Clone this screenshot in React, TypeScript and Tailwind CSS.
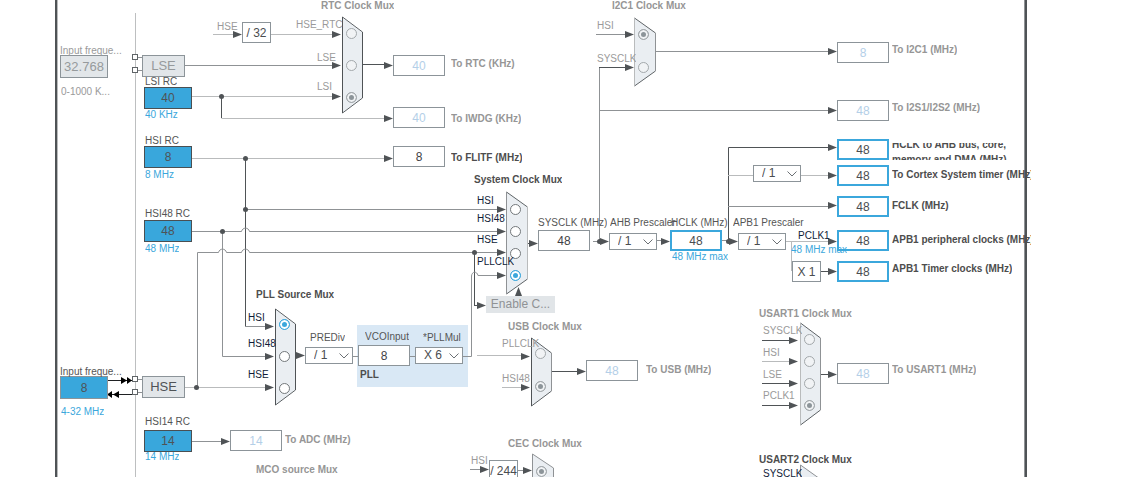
import { useState } from "react";
import clsx from "clsx";

type Tone = "text" | "title" | "muted" | "mutedTitle" | "signal" | "blue";

interface Caption {
  text: string;
  x: number;
  y: number; // baseline
  tone: Tone;
  htmlFor?: string;
  width?: number;
}

interface Field {
  id: string;
  x: number;
  y: number;
  value: string;
  kind: "source" | "input" | "locked" | "output" | "idle" | "limit";
  label?: string;
}

interface Mux {
  id: string;
  x: number;
  y: number;
  width: number;
  height: number;
  active: boolean;
  left: string;
  right: string;
  selected: number;
  inputs: { name: string; x: number; y: number; dot: number; width?: number }[];
}

const DARK = "#4f5356";
const MID = "#8f9295";
const LIGHT = "#b9bbbc";

const toneClass: Record<Tone, string> = {
  text: "text-[#555555]",
  title: "font-bold text-[#4d4d4d]",
  muted: "text-[#9a9a9a]",
  mutedTitle: "font-bold text-[#969696]",
  signal: "text-[#101c38]",
  blue: "text-[#3ba7dc]",
};

const fieldClass: Record<Field["kind"], string> = {
  source: "w-12 h-[22px] border border-[#4a4f52] bg-[#39a7dc] text-[#4f5356]",
  input: "w-12 h-[23px] border border-[#8c9499] bg-[#39a7dc] text-[#4f5356]",
  locked: "w-12 h-[23px] border border-[#8c9499] bg-[#e2e6e9] text-[13px] text-[#969a9c]",
  output: "w-[52px] h-[21px] border border-[#8c9499] bg-white text-[#3f4245]",
  idle: "w-[52px] h-[21px] border border-[#8c9499] bg-white text-[#b4cfe8]",
  limit: "w-[52px] h-[21px] border-2 border-[#3ba7dc] bg-white text-[#4a4d50]",
};

const fields: Field[] = [
  { id: "lse-freq", x: 60, y: 55, value: "32.768", kind: "locked" },
  { id: "hse-freq", x: 60, y: 376, value: "8", kind: "input" },
  { id: "lsi-rc", x: 144, y: 87, value: "40", kind: "source" },
  { id: "hsi-rc", x: 144, y: 146, value: "8", kind: "source" },
  { id: "hsi48-rc", x: 144, y: 220, value: "48", kind: "source" },
  { id: "hsi14-rc", x: 144, y: 430, value: "14", kind: "source" },
  { id: "rtc", x: 393, y: 55, value: "40", kind: "idle" },
  { id: "iwdg", x: 393, y: 107, value: "40", kind: "idle" },
  { id: "flitf", x: 393, y: 146, value: "8", kind: "output" },
  { id: "adc", x: 230, y: 430, value: "14", kind: "idle" },
  { id: "vco", x: 358, y: 345, value: "8", kind: "output" },
  { id: "sysclk", x: 538, y: 230, value: "48", kind: "output" },
  { id: "usb", x: 586, y: 360, value: "48", kind: "idle" },
  { id: "hclk", x: 670, y: 230, value: "48", kind: "limit" },
  { id: "i2c1", x: 837, y: 42, value: "8", kind: "idle" },
  { id: "i2s", x: 837, y: 100, value: "48", kind: "idle" },
  { id: "ahb-bus", x: 837, y: 139, value: "48", kind: "limit" },
  { id: "cortex", x: 837, y: 165, value: "48", kind: "limit" },
  { id: "fclk", x: 837, y: 196, value: "48", kind: "limit" },
  { id: "apb1-periph", x: 837, y: 230, value: "48", kind: "limit" },
  { id: "apb1-timer", x: 837, y: 261, value: "48", kind: "limit" },
  { id: "usart1", x: 837, y: 363, value: "48", kind: "idle" },
];

const factors = [
  { text: "/ 32", x: 242, y: 22 },
  { text: "X 1", x: 792, y: 261 },
  { text: "/ 244", x: 489, y: 460 },
];

const dividers = ["/ 1", "/ 2", "/ 4", "/ 8", "/ 16"];

const prescalers = [
  { id: "prediv", x: 305, y: 347, value: "/ 1", options: dividers },
  { id: "pllmul", x: 415, y: 347, value: "X 6", options: ["X 2", "X 3", "X 4", "X 6", "X 8", "X 12"] },
  { id: "ahb", x: 609, y: 233, value: "/ 1", options: dividers },
  { id: "apb1", x: 738, y: 233, value: "/ 1", options: dividers },
  { id: "systick", x: 753, y: 165, value: "/ 1", options: ["/ 1", "/ 8"], label: "Cortex prescaler" },
];

const captions: Caption[] = [
  { text: "Input freque...", x: 60, y: 54, tone: "muted", htmlFor: "lse-freq" },
  { text: "0-1000 K...", x: 61, y: 95, tone: "muted" },
  { text: "LSI RC", x: 145, y: 85, tone: "text", htmlFor: "lsi-rc" },
  { text: "40 KHz", x: 145, y: 118, tone: "blue" },
  { text: "HSI RC", x: 145, y: 144, tone: "text", htmlFor: "hsi-rc" },
  { text: "8 MHz", x: 145, y: 178, tone: "blue" },
  { text: "HSI48 RC", x: 145, y: 217, tone: "text", htmlFor: "hsi48-rc" },
  { text: "48 MHz", x: 145, y: 252, tone: "blue" },
  { text: "Input freque...", x: 60, y: 375, tone: "text", htmlFor: "hse-freq" },
  { text: "4-32 MHz", x: 61, y: 415, tone: "blue" },
  { text: "HSI14 RC", x: 145, y: 425, tone: "text", htmlFor: "hsi14-rc" },
  { text: "14 MHz", x: 145, y: 460, tone: "blue" },
  { text: "HSE", x: 217, y: 30, tone: "muted" },
  { text: "HSI", x: 471, y: 464, tone: "muted" },
  { text: "RTC Clock Mux", x: 321, y: 9, tone: "mutedTitle" },
  { text: "To RTC (KHz)", x: 451, y: 67, tone: "mutedTitle", htmlFor: "rtc" },
  { text: "To IWDG (KHz)", x: 451, y: 122, tone: "mutedTitle", htmlFor: "iwdg" },
  { text: "To FLITF (MHz)", x: 451, y: 161, tone: "title", htmlFor: "flitf" },
  { text: "System Clock Mux", x: 474, y: 183, tone: "title" },
  { text: "SYSCLK (MHz)", x: 538, y: 226, tone: "text", htmlFor: "sysclk" },
  { text: "AHB Prescaler", x: 610, y: 226, tone: "text", htmlFor: "ahb" },
  { text: "HCLK (MHz)", x: 671, y: 226, tone: "text", htmlFor: "hclk" },
  { text: "48 MHz max", x: 672, y: 260, tone: "blue" },
  { text: "APB1 Prescaler", x: 733, y: 226, tone: "text", htmlFor: "apb1" },
  { text: "PCLK1", x: 798, y: 239, tone: "signal" },
  { text: "48 MHz max", x: 791, y: 253, tone: "blue" },
  { text: "I2C1 Clock Mux", x: 612, y: 9, tone: "mutedTitle" },
  { text: "To I2C1 (MHz)", x: 892, y: 53, tone: "mutedTitle", htmlFor: "i2c1" },
  { text: "To I2S1/I2S2 (MHz)", x: 892, y: 111, tone: "mutedTitle", htmlFor: "i2s" },
  { text: "To Cortex System timer (MHz)", x: 892, y: 178, tone: "title", htmlFor: "cortex", width: 139 },
  { text: "FCLK (MHz)", x: 892, y: 209, tone: "title", htmlFor: "fclk" },
  { text: "APB1 peripheral clocks (MHz)", x: 892, y: 243, tone: "title", htmlFor: "apb1-periph", width: 139 },
  { text: "APB1 Timer clocks (MHz)", x: 892, y: 272, tone: "title", htmlFor: "apb1-timer" },
  { text: "PLL Source Mux", x: 256, y: 298, tone: "title" },
  { text: "PREDiv", x: 310, y: 341, tone: "text", htmlFor: "prediv" },
  { text: "VCOInput", x: 365, y: 340, tone: "text", htmlFor: "vco" },
  { text: "*PLLMul", x: 423, y: 341, tone: "text", htmlFor: "pllmul" },
  { text: "PLL", x: 360, y: 378, tone: "title" },
  { text: "To ADC (MHz)", x: 285, y: 443, tone: "mutedTitle", htmlFor: "adc" },
  { text: "MCO source Mux", x: 256, y: 473, tone: "mutedTitle" },
  { text: "USB Clock Mux", x: 508, y: 330, tone: "mutedTitle" },
  { text: "To USB (MHz)", x: 646, y: 373, tone: "mutedTitle", htmlFor: "usb" },
  { text: "CEC Clock Mux", x: 508, y: 447, tone: "mutedTitle" },
  { text: "USART1 Clock Mux", x: 759, y: 317, tone: "mutedTitle" },
  { text: "To USART1 (MHz)", x: 892, y: 373, tone: "mutedTitle", htmlFor: "usart1" },
  { text: "USART2 Clock Mux", x: 759, y: 463, tone: "title" },
];

const muxes: Mux[] = [
  {
    id: "rtc-mux", x: 342, y: 17, width: 20, height: 96, active: false, left: DARK, right: DARK, selected: 2,
    inputs: [
      { name: "HSE_RTC", x: 296, y: 28, dot: 33, width: 47 },
      { name: "LSE", x: 317, y: 61, dot: 65 },
      { name: "LSI", x: 317, y: 90, dot: 97 },
    ],
  },
  {
    id: "i2c1-mux", x: 634, y: 18, width: 21, height: 68, active: false, left: LIGHT, right: MID, selected: 0,
    inputs: [
      { name: "HSI", x: 597, y: 29, dot: 34 },
      { name: "SYSCLK", x: 597, y: 62, dot: 67 },
    ],
  },
  {
    id: "sys-mux", x: 506, y: 192, width: 21, height: 102, active: true, left: MID, right: LIGHT, selected: 3,
    inputs: [
      { name: "HSI", x: 477, y: 204, dot: 209 },
      { name: "HSI48", x: 477, y: 222, dot: 231 },
      { name: "HSE", x: 477, y: 243, dot: 253 },
      { name: "PLLCLK", x: 477, y: 265, dot: 275 },
    ],
  },
  {
    id: "pll-mux", x: 275, y: 309, width: 20, height: 96, active: true, left: DARK, right: DARK, selected: 0,
    inputs: [
      { name: "HSI", x: 248, y: 321, dot: 324 },
      { name: "HSI48", x: 248, y: 347, dot: 356 },
      { name: "HSE", x: 248, y: 378, dot: 388 },
    ],
  },
  {
    id: "usb-mux", x: 531, y: 338, width: 20, height: 68, active: false, left: DARK, right: MID, selected: 1,
    inputs: [
      { name: "PLLCLK", x: 502, y: 347, dot: 353 },
      { name: "HSI48", x: 502, y: 382, dot: 386 },
    ],
  },
  {
    id: "usart1-mux", x: 800, y: 323, width: 20, height: 102, active: false, left: LIGHT, right: MID, selected: 3,
    inputs: [
      { name: "SYSCLK", x: 763, y: 334, dot: 339 },
      { name: "HSI", x: 763, y: 356, dot: 361 },
      { name: "LSE", x: 763, y: 378, dot: 383 },
      { name: "PCLK1", x: 763, y: 399, dot: 405 },
    ],
  },
];

const wires: [string, string][] = [
  [LIGHT, "M213 34.5H234 M271 34.5H336 M192 96.5H336 M221.5 118.5H386 M192 158.5H386"],
  [MID, "M185 65.5H336"],
  [DARK, "M362 64.5H386 M221.5 96V118"],
  [DARK, "M245.5 158V327"],
  [MID, "M245 326.5H269"],
  [MID, "M245 209.5H500"],
  [MID, "M192 231.5H241.5C242.500 227 248.500 227 249.500 231.500H500"],
  [MID, "M222.5 231V356.5H269"],
  [MID, "M197.5 387V252.5H218.5C219.500 248 225.500 248 226.500 252.500H241.500C242.500 248 248.500 248 249.500 252.500H500"],
  [LIGHT, "M185 387.5H269"],
  [DARK, "M474.500 252V306 M474 305.500H480"],
  [DARK, "M295 355.5H300 M527 243.5H532"],
  [MID, "M353 356.5H358 M410 356.5H415"],
  [MID, "M463 356.5H471.500V276C472 271 477 271 478 275.500H500"],
  [LIGHT, "M477 355.500H525 M502 387.500H525"],
  [DARK, "M552 371.5H580"],
  [MID, "M192 441.5H224"],
  [MID, "M593 241.500H604 M599.5 241V67 M655 51.5H831"],
  [DARK, "M599 67.5H628"],
  [MID, "M596 34.5H628 M599 110.500H831"],
  [DARK, "M728.500 241V147.500H831"],
  [LIGHT, "M728 175.5H831 M786 241.500H831 M791.500 241V271"],
  [MID, "M728 206.500H831 M657 240.500H665 M722 240.500H733"],
  [DARK, "M821 271.500H831"],
  [DARK, "M762 340.500H793 M762 383.500H793 M762 405.500H793 M821 374.500H832"],
  [LIGHT, "M762 361.500H793"],
  [MID, "M470 469.500H484 M518 470.500H526"],
  [MID, "M138 57.5H142 M138 70.5H142 M138 379.5H142 M138 392.5H142"],
  ["#1f2123", "M108 380.500H132 M108 394.500H132"],
];

const arrows = [
  [242, 34], [341, 34], [341, 65], [341, 96], [393, 65], [393, 118], [393, 158],
  [506, 209], [506, 231], [506, 252], [506, 275], [538, 243], [486, 305],
  [274, 326], [274, 356], [274, 387], [305, 355], [530, 356], [530, 387], [586, 371], [230, 441],
  [609, 241], [670, 241], [738, 241], [634, 34], [634, 67], [837, 51], [837, 110], [837, 147],
  [837, 175], [837, 205], [837, 241], [837, 271],
  [798, 340], [798, 361], [798, 383], [798, 405], [837, 374], [489, 469], [532, 470],
];

const dots = [
  [221, 96], [245, 158], [245, 209], [222, 231], [196, 387], [474, 252], [599, 241], [728, 241],
];

function Wiring() {
  return (
    <svg className="absolute inset-0 size-full" fill="none" aria-hidden="true">
      <path d="M135.5 13V2000" stroke="#bdbfc0" />
      {wires.map(([color, d]) => (
        <path key={d} d={d} stroke={color} />
      ))}
      {arrows.map(([x, y]) => (
        <path key={`${x}-${y}`} d={`M${x} ${y + 0.5}l-9 -3.500v7z`} fill={DARK} />
      ))}
      {dots.map(([x, y]) => (
        <circle key={`${x}-${y}`} cx={x + 0.5} cy={y + 0.5} r="2.500" fill={DARK} />
      ))}
      <path d="M518.5 287l3.500 9h-7z" fill={DARK} />
      <path d="M121 377l6 3.500l-6 3.500z M127 377l5 3.500l-5 3.500z" fill="#000" />
      <path d="M119 391v7l-6 -3.500z M112 391v7l-5 -3.500z" fill="#000" />
      {[54, 67, 376, 389].map((y) => (
        <rect key={y} x="132.500" y={y + 0.5} width="5" height="5" fill="#fff" stroke="#5f6467" />
      ))}
    </svg>
  );
}

function MuxBody({ mux }: { mux: Mux }) {
  const { x, y, width, height } = mux;
  const l = x + 0.5;
  const r = l + width;
  return (
    <g>
      <path d={`M${l} ${y}L${r} ${y + 15}V${y + height - 15}L${l} ${y + height}z`} fill="#eaeef2" />
      <path d={`M${l} ${y}L${r} ${y + 15}M${r} ${y + height - 15}L${l} ${y + height}`} stroke="#5f6467" />
      <path d={`M${l} ${y}V${y + height}`} stroke={mux.left} />
      <path d={`M${r} ${y + 15}V${y + height - 15}`} stroke={mux.right} />
    </g>
  );
}

function Text({ text, x, y, tone, htmlFor, width }: Caption) {
  const Tag = htmlFor ? "label" : "span";
  return (
    <Tag
      htmlFor={htmlFor}
      className={clsx("absolute overflow-hidden whitespace-nowrap text-[10px] leading-3", toneClass[tone])}
      style={{ left: x, top: y - 9, width }}
    >
      {text}
    </Tag>
  );
}

function Radio({ mux, index, selected, onSelect }: { mux: Mux; index: number; selected: boolean; onSelect: () => void }) {
  const { name, x, y, dot, width } = mux.inputs[index];
  const id = `${mux.id}-${index}`;
  return (
    <>
      <Text text={name} x={x} y={y} width={width} tone={mux.active ? "signal" : "muted"} htmlFor={id} />
      <input
        id={id}
        type="radio"
        name={mux.id}
        checked={selected}
        onChange={onSelect}
        disabled={!mux.active}
        className={clsx(
          "absolute size-[11px] appearance-none rounded-full border",
          mux.active
            ? "border-[#73787b] bg-white checked:border-[#3ba7dc] checked:bg-[#3ba7dc] checked:shadow-[inset_0_0_0_2px_#ffffff]"
            : "border-[#a3a8ab] bg-[#f1f3f5] checked:bg-[#8c9499] checked:shadow-[inset_0_0_0_2px_#f1f3f5]"
        )}
        style={{ left: mux.x + 4, top: dot - 5 }}
      />
    </>
  );
}

function Prescaler({ item }: { item: (typeof prescalers)[number] }) {
  const [value, setValue] = useState(item.value);
  return (
    <div className="absolute h-[17px] w-12 border border-[#8c9499] bg-white" style={{ left: item.x, top: item.y }}>
      <select
        id={item.id}
        aria-label={item.label}
        value={value}
        onChange={(e) => setValue(e.target.value)}
        className="block size-full appearance-none bg-transparent pl-2 text-[12px] leading-[15px] text-[#4a4d50]"
      >
        {item.options.map((o) => (
          <option key={o}>{o}</option>
        ))}
      </select>
      <svg className="pointer-events-none absolute right-0.5 top-1 h-2 w-3" viewBox="0 0 12 8" fill="none" aria-hidden="true">
        <path d="M1.500 1.500L6 6L10.500 1.500" stroke="#6b7074" />
      </svg>
    </div>
  );
}

export default function App() {
  const [picked, setPicked] = useState<Record<string, number>>(
    Object.fromEntries(muxes.map((m) => [m.id, m.selected]))
  );

  return (
    <main className="relative h-screen w-full overflow-hidden bg-white font-['Liberation_Sans',Arial,sans-serif]">
      <div className="absolute inset-y-0 left-[55px] w-[3px] border-r border-[#b9bbbc] bg-[#4f5356]" />
      <div className="absolute inset-y-0 left-[1024px] w-[3px] border-l border-[#8f9295] bg-[#4f5356]" />

      <div className="absolute left-[357px] top-[325px] h-[62px] w-[111px] bg-[#d9e8f5]" />
      <Wiring />
      <svg className="absolute inset-0 size-full" fill="none" aria-hidden="true">
        {muxes.map((m) => (
          <MuxBody key={m.id} mux={m} />
        ))}
        {/* CEC and USART2 muxes run past the bottom edge */}
        <path d="M532.500 454L553.500 468V550H532.500z" fill="#eaeef2" stroke="#8f9295" />
        <path d="M800.500 465L821.500 480V560H800.500z" fill="#eaeef2" stroke="#8f9295" />
      </svg>

      {["LSE", "HSE"].map((name, i) => (
        <div
          key={name}
          className={clsx(
            "absolute left-[142px] flex h-[22px] w-[43px] items-center justify-center border border-[#8c9499] bg-[#e2e6e9] text-[13px]",
            i === 0 ? "top-[55px] text-[#969a9c]" : "top-[376px] text-[#4f5356]"
          )}
        >
          {name}
        </div>
      ))}

      {factors.map((f) => (
        <div
          key={f.text}
          className="absolute flex h-[21px] w-[29px] items-center justify-center whitespace-nowrap border border-[#8c9499] bg-white text-[12px] text-[#4a4d50]"
          style={{ left: f.x, top: f.y }}
        >
          {f.text}
        </div>
      ))}

      {fields.map((f) => (
        <input
          key={f.id}
          id={f.id}
          defaultValue={f.value}
          readOnly={f.kind !== "input" && f.kind !== "limit"}
          className={clsx("absolute text-center text-[12px]", fieldClass[f.kind])}
          style={{ left: f.x, top: f.y }}
        />
      ))}

      {prescalers.map((p) => (
        <Prescaler key={p.id} item={p} />
      ))}

      <button
        disabled
        className="absolute left-[486px] top-[296px] h-[17px] w-[69px] bg-[#e1e5e8] text-[12px] leading-[15px] text-[#8f9295]"
      >
        Enable C...
      </button>

      {captions.map((c) => (
        <Text key={`${c.text}-${c.x}-${c.y}`} {...c} />
      ))}
      <label
        htmlFor="ahb-bus"
        className="absolute left-[892px] top-[143px] flex h-[17px] w-[130px] items-center overflow-hidden text-[10px] leading-[15px] font-bold text-[#4d4d4d]"
      >
        HCLK to AHB bus, core, memory and DMA (MHz)
      </label>

      {muxes.map((m) =>
        m.inputs.map((input, i) => (
          <Radio
            key={`${m.id}-${input.name}`}
            mux={m}
            index={i}
            selected={picked[m.id] === i}
            onSelect={() => setPicked({ ...picked, [m.id]: i })}
          />
        ))
      )}
      <input
        type="radio"
        name="cec-mux"
        aria-label="HSI"
        defaultChecked
        disabled
        className="absolute left-[536px] top-[466px] size-[11px] appearance-none rounded-full border border-[#a3a8ab] bg-[#8c9499] shadow-[inset_0_0_0_2px_#f1f3f5]"
      />
      <Text text="SYSCLK" x={763} y={477} tone="signal" />
    </main>
  );
}
